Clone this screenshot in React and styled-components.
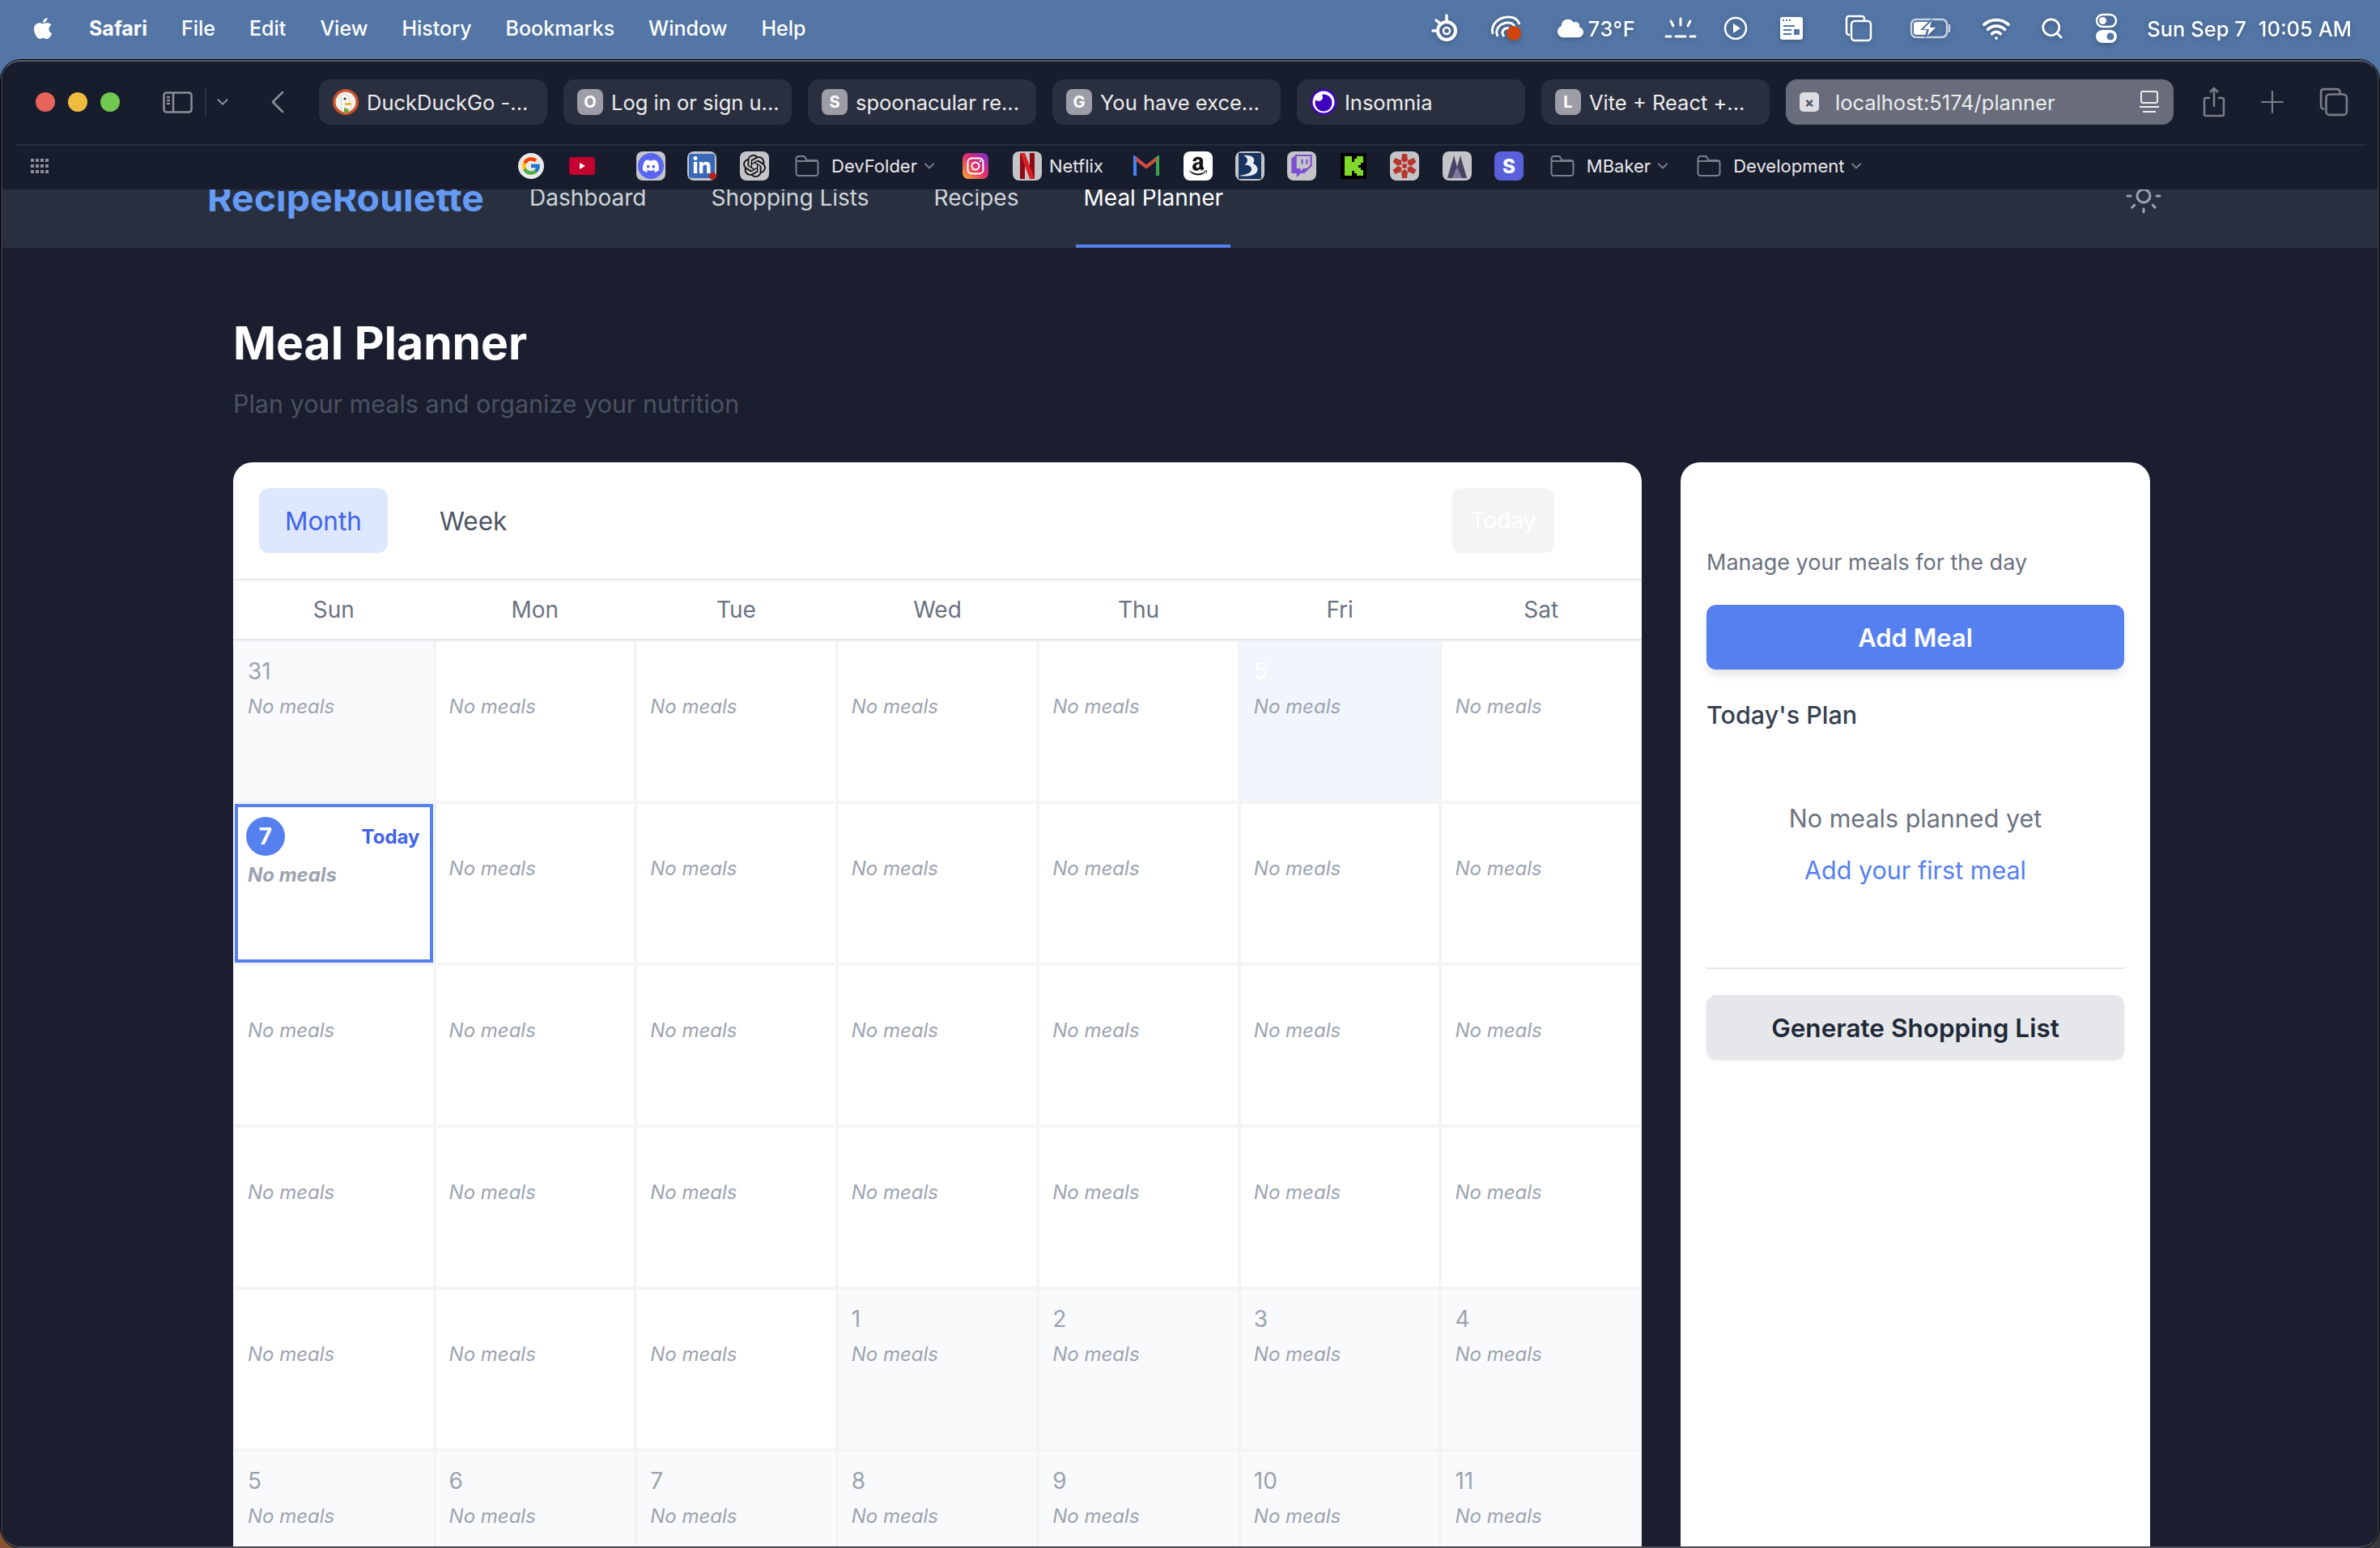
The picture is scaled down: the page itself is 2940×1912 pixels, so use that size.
import React from 'react'
import styled, { createGlobalStyle } from 'styled-components'
import { Sun, Search, Wifi, ChevronDown, Plus } from 'lucide-react'
import { FaApple, FaCloud, FaDiscord, FaLinkedinIn, FaAmazon, FaTwitch } from 'react-icons/fa'
import { FcGoogle } from 'react-icons/fc'
import { SiOpenai } from 'react-icons/si'

const GlobalStyle = createGlobalStyle`
  html, body {
    margin: 0;
    padding: 0;
    width: 2940px;
    height: 1912px;
    overflow: hidden;
    font-family: "Inter", "Liberation Sans", sans-serif;
  }
  * { box-sizing: border-box; }
`

const Desktop = styled.div`
  width: 2940px;
  height: 1912px;
  overflow: hidden;
  background:
    linear-gradient(to right, transparent 50%, #3a3a3e 50%) 0 100% / 100% 60px no-repeat,
    linear-gradient(to bottom, #5376a6 0 200px, #8a5433 200px);
`

const MenuBar = styled.div`
  height: 73px;
  display: flex;
  align-items: center;
  padding: 0 35px 3px 38px;
  color: #fff;
  font-size: 25px;
  font-weight: 500;
`

const MenuLeft = styled.div`
  display: flex;
  align-items: center;
  gap: 42px;
`

const MenuTitle = styled.span`
  font-weight: ${(p) => (p.$bold ? 700 : 500)};
`

const MenuRight = styled.div`
  margin-left: auto;
  display: flex;
  align-items: center;
  font-size: 25.5px;
  filter: drop-shadow(0 2px 3px rgba(0, 0, 0, 0.25));
`

const Slot = styled.span`
  display: inline-flex;
  align-items: center;
  justify-content: center;
  flex: none;
  width: ${(p) => p.$w}px;
  margin-left: ${(p) => p.$ml || 0}px;

  svg {
    flex: none;
  }
`

const MenuText = styled.span`
  white-space: nowrap;
  margin-left: ${(p) => p.$ml || 0}px;
  letter-spacing: ${(p) => p.$track || 0}px;
`

const Window = styled.div`
  height: 1840px;
  border: 1px solid #000;
  border-radius: 26px;
  overflow: hidden;
`

const Frame = styled.div`
  height: 100%;
  border: 2px solid #33353f;
  border-top-color: #5a5b66;
  border-bottom-color: #4a4b56;
  border-radius: 24px;
  background: #181d2e;
  overflow: hidden;
  display: flex;
  flex-direction: column;
`

const Toolbar = styled.div`
  height: 102px;
  flex: none;
  display: flex;
  align-items: center;
  padding: 0 0 2px 41px;
`

const Light = styled.span`
  width: 24px;
  height: 24px;
  border-radius: 50%;
  background: ${(p) => p.$color};
  margin-right: 16px;
  flex: none;
`

const ToolbarRule = styled.div`
  height: 2px;
  flex: none;
  margin: 0 14px 0 17px;
  background: #282d3d;
`

const Divider = styled.span`
  width: 2px;
  height: 36px;
  flex: none;
  background: #2c3140;
  margin-left: ${(p) => p.$ml}px;
`

const Tabs = styled.div`
  display: flex;
  gap: 20px;
  margin-left: 43px;
`

const Tab = styled.div`
  width: ${(p) => (p.$url ? 479 : 282)}px;
  height: 56px;
  border-radius: 14px;
  background: ${(p) => (p.$url ? '#686c7b' : '#2a2f3f')};
  display: flex;
  align-items: center;
  gap: 10px;
  padding: 0 17px;
  color: #eceded;
  font-size: 25.5px;
  white-space: nowrap;
`

const LetterIcon = styled.span`
  width: 32px;
  height: 32px;
  flex: none;
  border-radius: 8px;
  background: #9c9da7;
  color: #fff;
  font-size: 20px;
  font-weight: 700;
  display: flex;
  align-items: center;
  justify-content: center;
`

const UrlIcon = styled.span`
  width: 24px;
  height: 24px;
  flex: none;
  border-radius: 5px;
  background: #dcdde2;
  color: #555866;
  font-size: 17px;
  font-weight: 800;
  display: flex;
  align-items: center;
  justify-content: center;
  margin-right: 10px;
`

const UrlEnd = styled.span`
  margin-left: auto;
  display: flex;
`

const Bookmarks = styled.div`
  height: 54px;
  flex: none;
  display: flex;
  align-items: center;
  padding: 0 0 4px 35px;
  color: #e8e9ec;
  font-size: 22px;
`

const Tile = styled.span`
  position: relative;
  width: 36px;
  height: 36px;
  flex: none;
  border-radius: 8px;
  background: ${(p) => p.$bg || '#c4c5c9'};
  color: ${(p) => p.$fg || '#fff'};
  display: flex;
  align-items: center;
  justify-content: center;
  margin-left: ${(p) => p.$ml || 0}px;
`

const RoundTile = styled.span`
  width: 32px;
  height: 32px;
  border-radius: 50%;
  background: #e9e9ea;
  display: flex;
  align-items: center;
  justify-content: center;
`

const Disc = styled.span`
  width: 32px;
  height: 32px;
  border-radius: 50%;
  background: #5865f2;
  color: #fff;
  display: flex;
  align-items: center;
  justify-content: center;
`

const InnerSquare = styled.span`
  width: 32px;
  height: 30px;
  border-radius: 3px;
  background: #3a68b8;
  color: #fff;
  display: flex;
  align-items: center;
  justify-content: center;
`

const RedDot = styled.span`
  position: absolute;
  right: 0;
  bottom: 1px;
  width: 9px;
  height: 9px;
  border-radius: 50%;
  background: #b3261e;
`

const LetterGlyph = styled.span`
  font-size: 24px;
  font-weight: 800;
  color: #fff;
`

const BookmarkLabel = styled.span`
  margin-left: ${(p) => p.$ml || 15}px;
  white-space: nowrap;
`

const Page = styled.div`
  flex: 1;
  min-height: 0;
  overflow: hidden;
  background: #1a1e2e;
`

const Nav = styled.div`
  height: 120px;
  margin-top: -48px;
  background: #283040;
  display: flex;
  align-items: center;
  padding: 0 265px 0 253px;
`

const Logo = styled.div`
  font-size: 46.5px;
  font-weight: 700;
  color: #659af5;
  margin-right: 47px;
  margin-bottom: 4px;
  white-space: nowrap;
`

const NavLinks = styled.div`
  display: flex;
  gap: 62px;
  height: 100%;
`

const NavLink = styled.a`
  height: 100%;
  display: flex;
  align-items: center;
  padding: 0 9px;
  font-size: 28px;
  color: ${(p) => (p.$active ? '#fff' : '#d1d5db')};
  border-bottom: 4px solid ${(p) => (p.$active ? '#5680f0' : 'transparent')};
  white-space: nowrap;
`

const ThemeToggle = styled.span`
  margin-left: auto;
  margin-bottom: 8px;
  display: flex;
  color: #9ca3af;
`

const Main = styled.div`
  padding: 82px 281px 0 285px;
`

const Heading = styled.h1`
  margin: 0;
  font-size: 57px;
  line-height: 72px;
  font-weight: 700;
  color: #fff;
`

const Subheading = styled.p`
  margin: 15px 0 48px;
  font-size: 30.5px;
  line-height: 48px;
  color: #4b5162;
`

const Columns = styled.div`
  display: grid;
  grid-template-columns: 3fr 1fr;
  gap: 48px;
`

const Card = styled.div`
  background: #fff;
  border-radius: 24px;
  min-height: 1400px;
`

const CalendarHeader = styled.div`
  display: flex;
  align-items: center;
  gap: 32px;
  padding: 32px 108px 32px 32px;
  border-bottom: 2px solid #e5e7eb;
`

const ViewButton = styled.button`
  height: 80px;
  padding: 0 32px;
  border: 0;
  border-radius: 12px;
  font: 400 31.5px "Inter", sans-serif;
  background: ${(p) => (p.$active ? '#dde7fd' : 'transparent')};
  color: ${(p) => (p.$active ? '#4263eb' : '#4b5563')};
`

const TodayButton = styled.button`
  width: 126px;
  height: 80px;
  margin-left: auto;
  padding: 0;
  border: 0;
  border-radius: 12px;
  font: 400 28px "Inter", sans-serif;
  background: #f3f4f6;
  color: #fff;
`

const Weekdays = styled.div`
  display: grid;
  grid-template-columns: repeat(7, 1fr);
  height: 74px;
  border-bottom: 2px solid #e5e7eb;
`

const Weekday = styled.div`
  display: flex;
  align-items: center;
  justify-content: center;
  font-size: 28px;
  font-weight: 400;
  color: #6b7280;
`

const Days = styled.div`
  display: grid;
  grid-template-columns: repeat(7, 1fr);
  grid-auto-rows: 200px;
`

const Cell = styled.div`
  border: 2px solid #f3f4f6;
  padding: 16px;
  background: ${(p) => (p.$selected ? '#f0f5fe' : p.$muted ? '#f9fafb' : '#fff')};
  box-shadow: ${(p) => (p.$today ? 'inset 0 0 0 4px #5680f0' : 'none')};
`

const CellTop = styled.div`
  display: flex;
  align-items: center;
  justify-content: space-between;
  margin-bottom: 8px;
`

const DayNumber = styled.span`
  font-size: 28px;
  line-height: 40px;
  color: ${(p) => (p.$muted ? '#9ca3af' : '#fff')};
`

const TodayCircle = styled.span`
  width: 48px;
  height: 48px;
  margin-left: -2px;
  border-radius: 50%;
  background: #5680f0;
  color: #fff;
  font-size: 28px;
  font-weight: 700;
  display: flex;
  align-items: center;
  justify-content: center;
`

const TodayTag = styled.span`
  font-size: 24px;
  font-weight: 700;
  color: #4263eb;
`

const NoMeals = styled.div`
  font-size: 24px;
  line-height: 32px;
  font-style: italic;
  font-weight: ${(p) => (p.$bold ? 700 : 400)};
  color: #9ca3af;
`

const Sidebar = styled(Card)`
  padding: 104px 32px 32px;
`

const SideNote = styled.p`
  margin: 0 0 32px;
  font-size: 27px;
  line-height: 40px;
  color: #6b7280;
`

const PrimaryButton = styled.button`
  width: 100%;
  height: 80px;
  border: 0;
  border-radius: 12px;
  background: #5680f0;
  color: #fff;
  font: 600 31px "Inter", sans-serif;
  box-shadow: 0 8px 12px -2px rgba(0, 0, 0, 0.12);
`

const PlanTitle = styled.h3`
  margin: 36px 0 0;
  font-size: 30.5px;
  line-height: 40px;
  font-weight: 500;
  color: #374151;
`

const EmptyPlan = styled.div`
  padding: 84px 0 96px;
  text-align: center;
  font-size: 30.5px;
  line-height: 48px;
  color: #6b7280;
`

const EmptyLink = styled.div`
  margin-top: 16px;
  color: #5680f0;
`

const Rule = styled.div`
  height: 2px;
  background: #e5e7eb;
  margin-bottom: 32px;
`

const SecondaryButton = styled.button`
  width: 100%;
  height: 80px;
  border: 0;
  border-radius: 12px;
  background: #e5e7eb;
  color: #1f2937;
  font: 600 31.5px "Inter", sans-serif;
  box-shadow: 0 2px 4px rgba(0, 0, 0, 0.06);
`

const SteelIcon = () => (
  <svg width="36" height="36" viewBox="0 0 36 36" fill="none">
    <circle cx="20" cy="21" r="11" stroke="#fff" strokeWidth="4" />
    <circle cx="20" cy="21" r="4" stroke="#fff" strokeWidth="2.5" />
    <path d="M20 8V2M9 21H3M12 12 7 8" stroke="#fff" strokeWidth="3.5" strokeLinecap="round" />
  </svg>
)

const SyncIcon = () => (
  <svg width="42" height="34" viewBox="0 0 42 34" fill="none">
    <path d="M5 24C2 12 12 3 25 3c6 0 11 3 13 9" stroke="#fff" strokeWidth="3" />
    <path d="M11 27C7 18 14 10 24 10c4 0 7 2 8 5M19 27c-5-6 0-11 6-10" stroke="#fff" strokeWidth="3" />
    <ellipse cx="31" cy="23" rx="9" ry="9" fill="#d2440f" />
  </svg>
)

const BrightnessIcon = () => (
  <svg width="40" height="30" viewBox="0 0 40 30" fill="none" stroke="#fff" strokeWidth="3" strokeLinecap="round">
    <path d="M20 3v8M8 6l3 6M32 6l-3 6M2 25h6M14 25h12M32 25h6" />
  </svg>
)

const PlayIcon = () => (
  <svg width="30" height="30" viewBox="0 0 30 30" fill="none">
    <circle cx="15" cy="15" r="13" stroke="#fff" strokeWidth="2.5" />
    <path d="M12 9v12l9-6z" fill="#fff" />
  </svg>
)

const CommandIcon = () => (
  <svg width="30" height="30" viewBox="0 0 30 30">
    <rect x="1" y="1" width="28" height="28" rx="3" fill="#fff" />
    <path d="M5 11h14v2H5zM5 16h10v2H5zM5 21h10v2H5zM18 16h7v7h-7z" fill="#5376a6" />
    <path d="M4 4h2v2H4zM8 4h2v2H8zM12 4h2v2h-2z" fill="#5376a6" />
  </svg>
)

const StackIcon = ({ color = '#fff', size = 34, sw = 2.5 }) => (
  <svg width={size} height={size} viewBox="0 0 34 34" fill="none" stroke={color} strokeWidth={sw}>
    <path d="M6 25H5a3 3 0 0 1-3-3V5a3 3 0 0 1 3-3h16a3 3 0 0 1 3 3v2" />
    <rect x="8" y="8" width="24" height="24" rx="4" />
  </svg>
)

const BatteryIcon = () => (
  <svg width="52" height="26" viewBox="0 0 52 26" fill="none">
    <rect x="2" y="2" width="44" height="22" rx="6" stroke="#c8d2e2" strokeWidth="2.5" />
    <path d="M49 9v8" stroke="#c8d2e2" strokeWidth="2.5" strokeLinecap="round" />
    <rect x="5" y="5" width="20" height="16" rx="3" fill="#fff" />
    <path d="M28 0 13 15h8l-3 11 15-15h-8z" fill="#5376a6" />
    <path d="M27 4 17 14h7l-2 8 10-10h-7z" fill="#fff" />
  </svg>
)

const SwitchIcon = () => (
  <svg width="28" height="38" viewBox="0 0 28 38">
    <rect x="2" y="2" width="24" height="15" rx="7.5" fill="none" stroke="#fff" strokeWidth="2.5" />
    <circle cx="9.5" cy="9.5" r="4.5" fill="#fff" />
    <rect x="1" y="21" width="26" height="16" rx="8" fill="#fff" />
    <circle cx="19" cy="29" r="4.5" fill="#5376a6" />
  </svg>
)

const SidebarIcon = () => (
  <svg width="37" height="27" viewBox="0 0 37 27" fill="none" stroke="#8b8d98" strokeWidth="2.5">
    <rect x="1.5" y="1.5" width="34" height="24" rx="3" />
    <path d="M13 2v23M5 7h4M5 11h4M5 15h4" />
  </svg>
)

const BackIcon = () => (
  <svg width="16" height="28" viewBox="0 0 16 28" fill="none" stroke="#8b8d98" strokeWidth="2.5" strokeLinecap="round" strokeLinejoin="round">
    <path d="M14 2 2 14l12 12" />
  </svg>
)

const DuckIcon = () => (
  <svg width="32" height="32" viewBox="0 0 32 32">
    <circle cx="16" cy="16" r="16" fill="#c9532c" />
    <circle cx="16" cy="16" r="12.5" fill="#f3f1ee" />
    <path d="M11 7c5-2 9 1 9 6 0 3 3 5 3 8 0 5-3 8-7 8-5 0-6-4-5-8 1-5-2-9 0-14z" fill="#f8f8f8" stroke="#d8d2c8" />
    <path d="M15 17h8l-1 3h-7z" fill="#edb62e" />
    <path d="M14 23l6 2-1 4-5 0z" fill="#69a936" />
    <circle cx="15" cy="12" r="1.6" fill="#2a3144" />
  </svg>
)

const InsomniaIcon = () => (
  <svg width="32" height="32" viewBox="0 0 32 32">
    <circle cx="16" cy="16" r="16" fill="#4000bf" />
    <circle cx="16" cy="16" r="13.5" fill="#fff" />
    <circle cx="16" cy="17" r="10.5" fill="#4000bf" />
    <circle cx="10" cy="10" r="5" fill="#fff" />
  </svg>
)

const ReaderIcon = () => (
  <svg width="26" height="28" viewBox="0 0 26 28" fill="none" stroke="#eceded" strokeWidth="2">
    <rect x="3" y="1" width="20" height="14" rx="2" />
    <path d="M1 20h24M5 26h16" />
  </svg>
)

const ShareIcon = () => (
  <svg width="28" height="38" viewBox="0 0 28 38" fill="none" stroke="#7a7c88" strokeWidth="2.5">
    <path d="M9 14H4a2 2 0 0 0-2 2v18a2 2 0 0 0 2 2h20a2 2 0 0 0 2-2V16a2 2 0 0 0-2-2h-5" />
    <path d="M14 25V2M9 7l5-5 5 5" />
  </svg>
)

const GridDots = () => (
  <svg width="24" height="18" viewBox="0 0 24 18" fill="#8b8d98">
    {[0, 7, 14].map((y) =>
      [0, 6, 12, 18].map((x) => <rect key={`${x}-${y}`} x={x} y={y} width="4" height="4" />)
    )}
  </svg>
)

const FolderIcon = () => (
  <svg width="30" height="26" viewBox="0 0 30 26" fill="none" stroke="#7c7f8c" strokeWidth="2">
    <path d="M1.5 6V4a3 3 0 0 1 3-3h7l3 5h11a3 3 0 0 1 3 3v13a3 3 0 0 1-3 3h-21a3 3 0 0 1-3-3z" />
    <path d="M1.5 7h27" />
  </svg>
)

const YoutubeTile = () => (
  <svg width="32" height="22" viewBox="0 0 32 22">
    <rect width="32" height="22" rx="4" fill="#c3002f" />
    <path d="M13 7v8l7-4z" fill="#fff" />
  </svg>
)

const InstagramIcon = () => (
  <svg width="32" height="32" viewBox="0 0 32 32" fill="none">
    <defs>
      <linearGradient id="ig" x1="0" y1="1" x2="1" y2="0">
        <stop offset="0" stopColor="#f8b133" />
        <stop offset="0.5" stopColor="#e1306c" />
        <stop offset="1" stopColor="#7b2cd0" />
      </linearGradient>
    </defs>
    <rect width="32" height="32" rx="7" fill="url(#ig)" />
    <rect x="6.5" y="6.5" width="19" height="19" rx="5" stroke="#fff" strokeWidth="2" />
    <circle cx="16" cy="16" r="4.5" stroke="#fff" strokeWidth="2" />
    <circle cx="22" cy="10" r="1.2" fill="#fff" />
  </svg>
)

const NetflixIcon = () => (
  <svg width="22" height="32" viewBox="0 0 22 32">
    <path d="M2 0h6v32l-6 0z" fill="#8f0a14" />
    <path d="M14 0h6v32h-6z" fill="#8f0a14" />
    <path d="M2 0h6l12 32h-6z" fill="#d81f26" />
  </svg>
)

const GmailIcon = () => (
  <svg width="32" height="26" viewBox="0 0 32 26" fill="none">
    <path d="M2 25V3l14 11" stroke="#4285f4" strokeWidth="4" />
    <path d="M30 25V3L16 14" stroke="#34a853" strokeWidth="4" />
    <path d="M3 4l13 10L29 4" stroke="#d9483b" strokeWidth="4" />
  </svg>
)

const SwirlIcon = () => (
  <svg width="28" height="32" viewBox="0 0 28 32">
    <rect width="28" height="32" fill="#17335f" />
    <path d="M6 3c10-1 16 3 12 10 7 3 7 10 2 13-5 3-14 3-19 2 7-1 15-3 15-8 0-4-5-6-9-5 5-3 6-9-1-12z" fill="#e8ecf2" />
  </svg>
)

const KickIcon = () => (
  <svg width="32" height="32" viewBox="0 0 32 32">
    <rect width="32" height="32" fill="#000" />
    <path d="M5 4h9v7h3V7h3V4h8v8h-3v3h-3v3h3v3h3v7h-8v-3h-3v-3h-3v6H5z" fill="#7fd82a" />
  </svg>
)

const WheelIcon = () => (
  <svg width="32" height="32" viewBox="0 0 32 32" fill="#b8352c">
    {[0, 60, 120, 180, 240, 300].map((r) => (
      <path key={r} d="M13 1h6l1 8-4 3-4-3z" transform={`rotate(${r} 16 16)`} />
    ))}
    <circle cx="16" cy="16" r="3" />
  </svg>
)

const PeaksIcon = () => (
  <svg width="28" height="32" viewBox="0 0 28 32">
    <path d="M2 31 10 3l4 14 4-14 8 28z" fill="#4a4463" />
    <path d="M8 31l6-14 6 14z" fill="#8279a3" />
  </svg>
)

const weekdays = ['Sun', 'Mon', 'Tue', 'Wed', 'Thu', 'Fri', 'Sat']

const calendarDays = [
  { n: 31, muted: true },
  ...Array.from({ length: 30 }, (_, i) => ({ n: i + 1 })),
  ...Array.from({ length: 11 }, (_, i) => ({ n: i + 1, muted: true })),
]

const tabs = [
  { icon: <DuckIcon />, label: 'DuckDuckGo -...' },
  { icon: <LetterIcon>O</LetterIcon>, label: 'Log in or sign u...' },
  { icon: <LetterIcon>S</LetterIcon>, label: 'spoonacular re...' },
  { icon: <LetterIcon>G</LetterIcon>, label: 'You have exce...' },
  { icon: <InsomniaIcon />, label: 'Insomnia' },
  { icon: <LetterIcon>L</LetterIcon>, label: 'Vite + React +...' },
]

const Chevron = ({ ml = 9 }) => (
  <Slot $w={12} $ml={ml}>
    <ChevronDown size={20} color="#7d7f88" strokeWidth={2.2} />
  </Slot>
)

const App = () => {
  return (
    <>
      <GlobalStyle />
      <Desktop>
        <MenuBar>
          <MenuLeft>
            <FaApple size={30} color="#fff" />
            <MenuTitle $bold>Safari</MenuTitle>
            <MenuTitle>File</MenuTitle>
            <MenuTitle>Edit</MenuTitle>
            <MenuTitle>View</MenuTitle>
            <MenuTitle>History</MenuTitle>
            <MenuTitle>Bookmarks</MenuTitle>
            <MenuTitle>Window</MenuTitle>
            <MenuTitle>Help</MenuTitle>
          </MenuLeft>
          <MenuRight>
            <Slot $w={36}><SteelIcon /></Slot>
            <Slot $w={42} $ml={36}><SyncIcon /></Slot>
            <Slot $w={32} $ml={43}><FaCloud size={32} color="#fff" /></Slot>
            <MenuText $ml={6} $track={0.5}>73°F</MenuText>
            <Slot $w={40} $ml={36}><BrightnessIcon /></Slot>
            <Slot $w={30} $ml={33}><PlayIcon /></Slot>
            <Slot $w={30} $ml={39}><CommandIcon /></Slot>
            <Slot $w={34} $ml={51}><StackIcon /></Slot>
            <Slot $w={52} $ml={46}><BatteryIcon /></Slot>
            <Slot $w={34} $ml={38}><Wifi size={36} color="#fff" strokeWidth={2.5} /></Slot>
            <Slot $w={28} $ml={38}><Search size={30} color="#fff" strokeWidth={2.2} /></Slot>
            <Slot $w={28} $ml={39}><SwitchIcon /></Slot>
            <MenuText $ml={36}>Sun Sep 7</MenuText>
            <MenuText $ml={15}>10:05 AM</MenuText>
          </MenuRight>
        </MenuBar>
        <Window>
          <Frame>
            <Toolbar>
              <Light $color="#e8645a" />
              <Light $color="#f0bc40" />
              <Light $color="#70c850" />
              <Slot $w={37} $ml={37}><SidebarIcon /></Slot>
              <Divider $ml={15} />
              <Slot $w={12} $ml={14}><ChevronDown size={22} color="#8b8d98" strokeWidth={2.2} /></Slot>
              <Slot $w={16} $ml={54}><BackIcon /></Slot>
              <Tabs>
                {tabs.map((tab) => (
                  <Tab key={tab.label}>
                    {tab.icon}
                    <span>{tab.label}</span>
                  </Tab>
                ))}
                <Tab $url>
                  <UrlIcon>×</UrlIcon>
                  <span>localhost:5174/planner</span>
                  <UrlEnd><ReaderIcon /></UrlEnd>
                </Tab>
              </Tabs>
              <Slot $w={28} $ml={36}><ShareIcon /></Slot>
              <Slot $w={26} $ml={45}><Plus size={44} color="#7a7c88" strokeWidth={1.2} /></Slot>
              <Slot $w={36} $ml={45}><StackIcon color="#7a7c88" size={36} /></Slot>
            </Toolbar>
            <ToolbarRule />
            <Bookmarks>
              <Slot $w={24}><GridDots /></Slot>
              <Slot $w={36} $ml={576}>
                <RoundTile><FcGoogle size={26} /></RoundTile>
              </Slot>
              <Slot $w={36} $ml={27}><YoutubeTile /></Slot>
              <Tile $ml={49}><Disc><FaDiscord size={22} /></Disc></Tile>
              <Tile $ml={27}>
                <InnerSquare><FaLinkedinIn size={24} /></InnerSquare>
                <RedDot />
              </Tile>
              <Tile $ml={29} $fg="#111"><SiOpenai size={28} /></Tile>
              <Slot $w={30} $ml={32}><FolderIcon /></Slot>
              <BookmarkLabel>DevFolder</BookmarkLabel>
              <Chevron />
              <Slot $w={36} $ml={33}><InstagramIcon /></Slot>
              <Tile $ml={28}><NetflixIcon /></Tile>
              <BookmarkLabel $ml={9}>Netflix</BookmarkLabel>
              <Slot $w={36} $ml={35}><GmailIcon /></Slot>
              <Tile $ml={28} $bg="#fff" $fg="#111"><FaAmazon size={26} /></Tile>
              <Tile $ml={28}><SwirlIcon /></Tile>
              <Tile $ml={28} $fg="#7b4fd0"><FaTwitch size={28} /></Tile>
              <Slot $w={36} $ml={28}><KickIcon /></Slot>
              <Tile $ml={27}><WheelIcon /></Tile>
              <Tile $ml={29}><PeaksIcon /></Tile>
              <Tile $ml={28} $bg="#5a5fdb">
                <LetterGlyph>S</LetterGlyph>
              </Tile>
              <Slot $w={30} $ml={33}><FolderIcon /></Slot>
              <BookmarkLabel>MBaker</BookmarkLabel>
              <Chevron />
              <Slot $w={30} $ml={36}><FolderIcon /></Slot>
              <BookmarkLabel>Development</BookmarkLabel>
              <Chevron />
            </Bookmarks>
            <Page>
              <Nav>
                <Logo>RecipeRoulette</Logo>
                <NavLinks>
                  <NavLink>Dashboard</NavLink>
                  <NavLink>Shopping Lists</NavLink>
                  <NavLink>Recipes</NavLink>
                  <NavLink $active>Meal Planner</NavLink>
                </NavLinks>
                <ThemeToggle><Sun size={48} strokeWidth={1.5} /></ThemeToggle>
              </Nav>
              <Main>
                <Heading>Meal Planner</Heading>
                <Subheading>Plan your meals and organize your nutrition</Subheading>
                <Columns>
                  <Card>
                    <CalendarHeader>
                      <ViewButton $active>Month</ViewButton>
                      <ViewButton>Week</ViewButton>
                      <TodayButton>Today</TodayButton>
                    </CalendarHeader>
                    <Weekdays>
                      {weekdays.map((d) => <Weekday key={d}>{d}</Weekday>)}
                    </Weekdays>
                    <Days>
                      {calendarDays.map((day, i) => {
                        const today = i === 7
                        return (
                          <Cell key={i} $muted={day.muted} $selected={i === 5} $today={today}>
                            <CellTop>
                              {today ? (
                                <>
                                  <TodayCircle>{day.n}</TodayCircle>
                                  <TodayTag>Today</TodayTag>
                                </>
                              ) : (
                                <DayNumber $muted={day.muted}>{day.n}</DayNumber>
                              )}
                            </CellTop>
                            <NoMeals $bold={today}>No meals</NoMeals>
                          </Cell>
                        )
                      })}
                    </Days>
                  </Card>
                  <Sidebar>
                    <SideNote>Manage your meals for the day</SideNote>
                    <PrimaryButton>Add Meal</PrimaryButton>
                    <PlanTitle>Today's Plan</PlanTitle>
                    <EmptyPlan>
                      <div>No meals planned yet</div>
                      <EmptyLink>Add your first meal</EmptyLink>
                    </EmptyPlan>
                    <Rule />
                    <SecondaryButton>Generate Shopping List</SecondaryButton>
                  </Sidebar>
                </Columns>
              </Main>
            </Page>
          </Frame>
        </Window>
      </Desktop>
    </>
  )
}

export default App
